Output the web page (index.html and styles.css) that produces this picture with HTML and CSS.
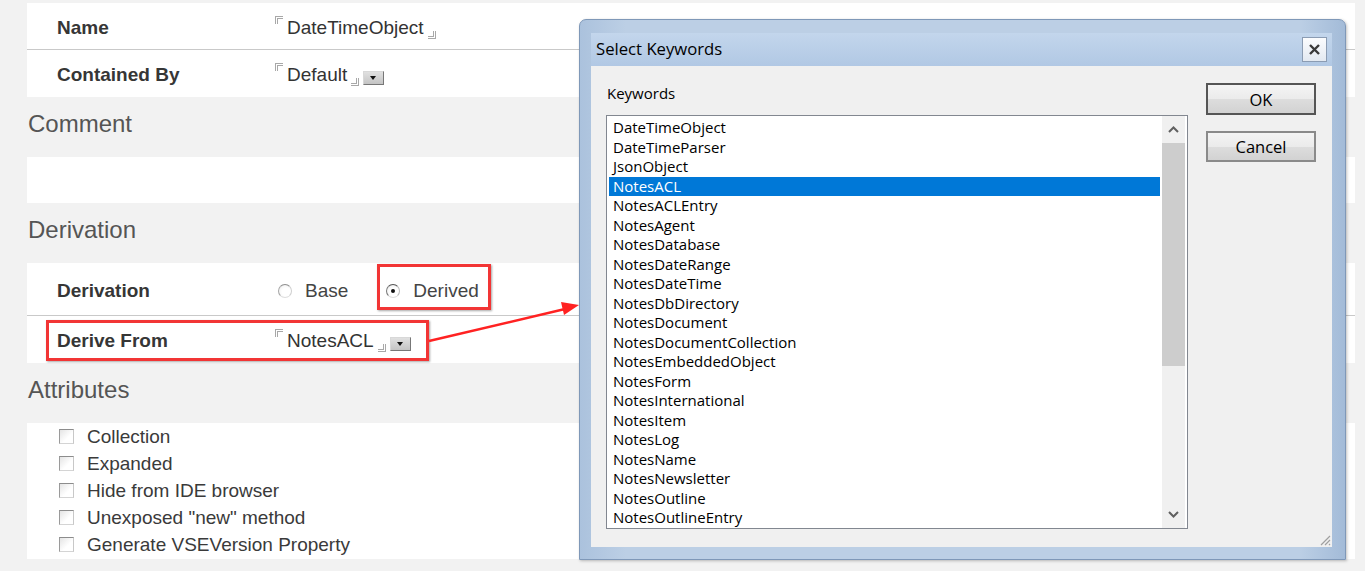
FILE: index.html
```html
<!DOCTYPE html>
<html lang="en">
<head>
<meta charset="utf-8">
<title>Select Keywords</title>
<link rel="stylesheet" href="styles.css">
</head>
<body>
<div class="page">
  <section class="panel">
    <div class="row">
      <div class="label">Name</div>
      <div class="value"><span class="cl"></span><span class="txt">DateTimeObject</span><span class="cr"></span></div>
    </div>
    <div class="row r47">
      <div class="label">Contained By</div>
      <div class="value"><span class="cl"></span><span class="txt">Default</span><span class="cr"></span><span class="dd"></span></div>
    </div>
  </section>

  <h2 class="heading">Comment</h2>
  <section class="panel comment"></section>

  <h2 class="heading">Derivation</h2>
  <section class="panel">
    <div class="row r52">
      <div class="label">Derivation</div>
      <div class="radios">
        <span class="radio-item"><span class="radio"></span>Base</span>
        <span class="radio-item"><span class="radio checked"></span>Derived</span>
      </div>
    </div>
    <div class="row r47">
      <div class="label">Derive From</div>
      <div class="value"><span class="cl"></span><span class="txt">NotesACL</span><span class="cr"></span><span class="dd"></span></div>
    </div>
  </section>

  <h2 class="heading">Attributes</h2>
  <section class="panel attrs">
    <div class="check-row"><span class="checkbox"></span>Collection</div>
    <div class="check-row"><span class="checkbox"></span>Expanded</div>
    <div class="check-row"><span class="checkbox"></span>Hide from IDE browser</div>
    <div class="check-row"><span class="checkbox"></span>Unexposed "new" method</div>
    <div class="check-row"><span class="checkbox"></span>Generate VSEVersion Property</div>
  </section>
</div>

<div class="mark mark-derived"></div>
<div class="mark mark-derive-from"></div>
<svg class="arrow" width="1365" height="571" viewBox="0 0 1365 571">
  <line x1="429" y1="341" x2="565" y2="309" stroke="#f22" stroke-width="2.5"/>
  <polygon points="579,305 564,315 561,302" fill="#f22"/>
</svg>

<div class="dialog">
  <div class="titlebar">
    <span class="title">Select Keywords</span>
    <span class="close">
      <svg width="13" height="13" viewBox="0 0 13 13"><path d="M2 2 L11 11 M11 2 L2 11" stroke="#3a3a3a" stroke-width="2.4" fill="none"/></svg>
    </span>
  </div>
  <div class="client">
    <div class="left">
      <div class="kwlabel">Keywords</div>
      <div class="listbox">
        <ul class="items">
          <li>DateTimeObject</li>
          <li>DateTimeParser</li>
          <li>JsonObject</li>
          <li class="sel">NotesACL</li>
          <li>NotesACLEntry</li>
          <li>NotesAgent</li>
          <li>NotesDatabase</li>
          <li>NotesDateRange</li>
          <li>NotesDateTime</li>
          <li>NotesDbDirectory</li>
          <li>NotesDocument</li>
          <li>NotesDocumentCollection</li>
          <li>NotesEmbeddedObject</li>
          <li>NotesForm</li>
          <li>NotesInternational</li>
          <li>NotesItem</li>
          <li>NotesLog</li>
          <li>NotesName</li>
          <li>NotesNewsletter</li>
          <li>NotesOutline</li>
          <li>NotesOutlineEntry</li>
        </ul>
        <div class="vscroll">
          <div class="sbtn"><svg width="11" height="7" viewBox="0 0 11 7"><path d="M1 6 L5.5 1.5 L10 6" stroke="#606060" stroke-width="2" fill="none"/></svg></div>
          <div class="track"><div class="thumb"></div></div>
          <div class="sbtn"><svg width="11" height="7" viewBox="0 0 11 7"><path d="M1 1 L5.5 5.5 L10 1" stroke="#606060" stroke-width="2" fill="none"/></svg></div>
        </div>
      </div>
    </div>
    <div class="buttons">
      <button class="btn default">OK</button>
      <button class="btn">Cancel</button>
    </div>
    <svg class="grip" width="12" height="12" viewBox="0 0 12 12">
      <path d="M11 2 L2 11 M11 6 L6 11 M11 10 L10 11" stroke="#a0a0a0" stroke-width="1.2"/>
    </svg>
  </div>
</div>
</body>
</html>
```

FILE: styles.css
```css
* { box-sizing: border-box; }

body {
  margin: 0;
  width: 1365px;
  height: 571px;
  overflow: hidden;
  position: relative;
  background: #f2f2f2;
  font-family: "Liberation Sans", Arial, sans-serif;
  color: #333;
}

.page {
  padding: 3px 10px 0 27px;
}

.panel {
  background: #fff;
  width: 1328px;
}

.row {
  display: flex;
  align-items: center;
  height: 46px;
  padding-top: 3px;
}
.row + .row { border-top: 1px solid #c9c9c9; }
.row.r47 { height: 48px; }
.row.r52 { height: 52px; }

.label {
  flex: none;
  width: 248px;
  padding-left: 30px;
  font-weight: bold;
  font-size: 19px;
  color: #363636;
}

.value {
  display: flex;
  align-items: center;
  font-size: 19px;
  color: #333;
}

.cl {
  width: 8px;
  height: 8px;
  border-style: double;
  border-color: #a8a8a8;
  border-width: 3px 0 0 3px;
  margin-right: 4px;
  align-self: flex-start;
  margin-top: -1px;
}
.cr {
  width: 8px;
  height: 8px;
  border-style: double;
  border-color: #a8a8a8;
  border-width: 0 3px 3px 0;
  margin-left: 4px;
  margin-top: 14px;
}

.dd {
  width: 21px;
  height: 14px;
  margin-left: 4px;
  margin-top: 5px;
  background: linear-gradient(#e0e0e0, #c4c4c4);
  border: 1px solid;
  border-color: #d8d8d8 #777 #777 #d8d8d8;
  position: relative;
}
.dd::after {
  content: "";
  position: absolute;
  left: 6px;
  top: 4px;
  border-style: solid;
  border-width: 4px 3.5px 0 3.5px;
  border-color: #111 transparent transparent transparent;
}

.heading {
  margin: 0;
  height: 60px;
  padding: 13px 0 0 1px;
  font-size: 24px;
  line-height: 28px;
  font-weight: normal;
  color: #555;
}

.comment { height: 46px; }

.radios {
  display: flex;
  align-items: center;
  font-size: 19px;
  color: #444;
  padding-left: 3px;
}
.radio-item {
  display: flex;
  align-items: center;
  margin-right: 38px;
}
.radio {
  width: 14px;
  height: 14px;
  border-radius: 50%;
  border: 1px solid #a9a9a9;
  border-color: #8f8f8f #cfcfcf #dedede #a6a6a6;
  background: radial-gradient(circle at 60% 60%, #fff 40%, #ececec 100%);
  margin-right: 13px;
  position: relative;
}
.radio.checked { border-color: #555 #bbb #ddd #777; }
.radio.checked::after {
  content: "";
  position: absolute;
  left: 4px;
  top: 4px;
  width: 4px;
  height: 4px;
  border-radius: 50%;
  background: #111;
}

.attrs {
  height: 136px;
  padding-left: 32px;
}
.check-row {
  display: flex;
  align-items: center;
  height: 27px;
  font-size: 19px;
  color: #3a3a3a;
}
.checkbox {
  width: 15px;
  height: 15px;
  margin-right: 13px;
  border: 1px solid;
  border-color: #8c8c8c #c8c8c8 #d4d4d4 #9a9a9a;
  background: linear-gradient(135deg, #e4e4e4, #fff 60%);
}

/* annotations */
.mark {
  position: absolute;
  border: 3px solid #f23535;
  box-shadow: 1px 1px 2px rgba(0, 0, 0, 0.35);
}
.mark-derived { left: 377px; top: 264px; width: 114px; height: 46px; }
.mark-derive-from { left: 46px; top: 320px; width: 383px; height: 41px; }
.arrow { position: absolute; left: 0; top: 0; pointer-events: none; }

/* dialog */
.dialog {
  position: absolute;
  left: 579px;
  top: 19px;
  width: 767px;
  height: 541px;
  border: 1px solid #7f98b8;
  border-radius: 7px 7px 0 0;
  background: linear-gradient(90deg, #abc2dd, #bccfe5 6%, #bccfe5 94%, #a3bbd8);
  padding: 13px 13px 12px 11px;
  box-shadow: 1px 1px 3px rgba(0, 0, 0, 0.25);
  font-family: "Open Sans", "Noto Sans", sans-serif;
  color: #000;
}

.titlebar {
  height: 33px;
  display: flex;
  align-items: center;
  justify-content: space-between;
  padding: 0 5px 3px 5px;
  background: linear-gradient(#c3d6ec, #b1c8e4);
}
.title { font-size: 16.7px; }
.close {
  width: 25px;
  height: 25px;
  margin-top: 3px;
  display: flex;
  align-items: center;
  justify-content: center;
  border: 1px solid #8b9cb3;
  background: linear-gradient(#fbfcfe, #e3e9f1);
}

.client {
  position: relative;
  height: 481px;
  background: #f0f0f0;
  display: flex;
  padding: 17px 16px 0 15px;
}

.left { width: 582px; }
.kwlabel {
  font-size: 15px;
  line-height: 20px;
  padding-left: 1px;
  margin-bottom: 12px;
}

.listbox {
  height: 414px;
  border: 1px solid #828790;
  background: #fff;
  display: flex;
}
.items {
  list-style: none;
  margin: 0;
  padding: 2px 2px 0 2px;
  flex: 1;
  font-size: 15px;
}
.items li {
  height: 19.5px;
  line-height: 19.5px;
  padding-left: 4px;
  white-space: nowrap;
}
.items li.sel {
  background: #0078d7;
  color: #fff;
}

.vscroll {
  width: 23px;
  margin-right: 2px;
  display: flex;
  flex-direction: column;
  background: #f0f0f0;
}
.sbtn {
  height: 27px;
  display: flex;
  align-items: center;
  justify-content: center;
}
.track { flex: 1; }
.thumb {
  height: 223px;
  background: #cdcdcd;
}

.buttons {
  margin-left: 18px;
  width: 110px;
  display: flex;
  flex-direction: column;
  gap: 16px;
}
.btn {
  height: 31px;
  font-family: "Open Sans", "Noto Sans", sans-serif;
  font-size: 16.5px;
  color: #000;
  background: linear-gradient(#f4f4f4 0%, #ebebeb 50%, #dddddd 51%, #d2d2d2 100%);
  border: 2px solid #8a8a8a;
  padding: 0;
}
.btn.default {
  height: 32px;
  border-color: #555;
}

.grip {
  position: absolute;
  right: 1px;
  bottom: 1px;
}
```
